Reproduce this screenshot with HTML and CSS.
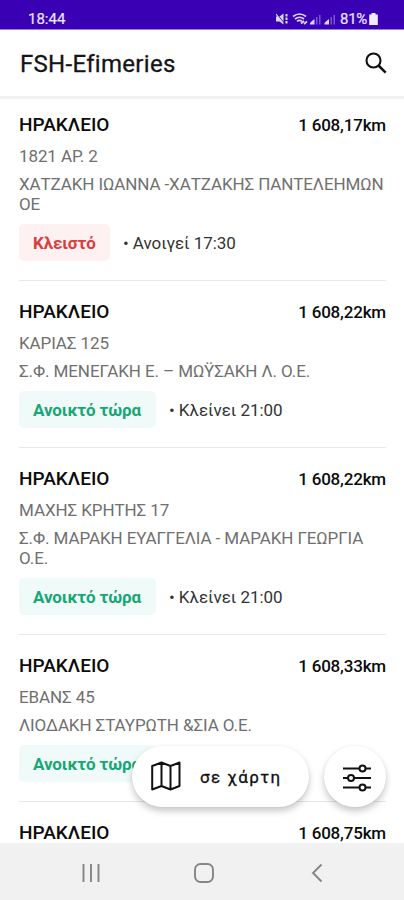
FILE: index.html
```html
<!DOCTYPE html>
<html lang="el">
<head>
<meta charset="utf-8">
<title>FSH-Efimeries</title>
<link rel="stylesheet" href="styles.css">
</head>
<body>
<div class="screen">
  <div class="status">
    <span class="clock">18:44</span>
    <div class="indicators">
      <svg class="sys" width="60" height="14" viewBox="0 0 60 14" fill="#ddd6fa">
        <path d="M0 4.500h3.500l4-3v11l-4-3H0z"/>
        <path d="M0 1l8 10" stroke="#3a00b3" stroke-width="1.200"/>
        <path d="M0 2l7 9" stroke="#ddd6fa" stroke-width="1.200"/>
        <path d="M10.500 2v10" stroke="#ddd6fa" stroke-width="2" stroke-dasharray="2.500 1"/>
        <g fill="none" stroke="#ddd6fa" stroke-width="1.700"><path d="M17 4.500q6.500-5 13 0M19 7q4.500-3.500 9 0M21 9.300q2.500-2 5 0"/><path d="M25 11.500l3-2.500M28 12l3-2.500"/></g>
        <path d="M34 12.500V11l2-2 2.500-2v5.500z"/><path d="M40 5h1.500v7.500H40zM43 3h1.500v9.500H43z" opacity=".4"/>
        <path d="M48.500 12.500V11l2-2L53 7v5.500z"/><path d="M54.500 5H56v7.500h-1.500zM57.500 3H59v9.500h-1.500z" opacity=".4"/>
      </svg>
      <span class="percent">81%</span>
      <svg class="battery" width="9" height="12" viewBox="0 0 9 12" fill="#f0ecff"><path d="M2.500 0h4v1.500h2.300V12H.2V1.500h2.300z"/></svg>
    </div>
  </div>
  <header class="appbar">
    <h1>FSH-Efimeries</h1>
    <svg width="24" height="24" viewBox="0 0 24 24" fill="none" stroke="#111" stroke-width="2.100"><circle cx="9.500" cy="9.500" r="7"/><path d="M14.500 14.500l7.200 7.200" stroke-width="2.500"/></svg>
  </header>
  <main class="list">
    <article class="item">
      <div class="top"><h2>ΗΡΑΚΛΕΙΟ</h2><span class="km">1 608,17km</span></div>
      <p class="address">1821 ΑΡ. 2</p>
      <p class="name">ΧΑΤΖΑΚΗ ΙΩΑΝΝΑ -ΧΑΤΖΑΚΗΣ ΠΑΝΤΕΛΕΗΜΩΝ<br>ΟΕ</p>
      <div class="state"><span class="badge closed">Κλειστό</span><span class="hours">• Ανοιγεί 17:30</span></div>
    </article>
    <article class="item">
      <div class="top"><h2>ΗΡΑΚΛΕΙΟ</h2><span class="km">1 608,22km</span></div>
      <p class="address">ΚΑΡΙΑΣ 125</p>
      <p class="name">Σ.Φ. ΜΕΝΕΓΑΚΗ Ε. – ΜΩΫΣΑΚΗ Λ. Ο.Ε.</p>
      <div class="state"><span class="badge open">Ανοικτό τώρα</span><span class="hours">• Κλείνει 21:00</span></div>
    </article>
    <article class="item">
      <div class="top"><h2>ΗΡΑΚΛΕΙΟ</h2><span class="km">1 608,22km</span></div>
      <p class="address">ΜΑΧΗΣ ΚΡΗΤΗΣ 17</p>
      <p class="name">Σ.Φ. ΜΑΡΑΚΗ ΕΥΑΓΓΕΛΙΑ - ΜΑΡΑΚΗ ΓΕΩΡΓΙΑ<br>Ο.Ε.</p>
      <div class="state"><span class="badge open">Ανοικτό τώρα</span><span class="hours">• Κλείνει 21:00</span></div>
    </article>
    <article class="item">
      <div class="top"><h2>ΗΡΑΚΛΕΙΟ</h2><span class="km">1 608,33km</span></div>
      <p class="address">ΕΒΑΝΣ 45</p>
      <p class="name">ΛΙΟΔΑΚΗ ΣΤΑΥΡΩΤΗ &amp;ΣΙΑ Ο.Ε.</p>
      <div class="state"><span class="badge open">Ανοικτό τώρα</span></div>
    </article>
    <article class="item">
      <div class="top"><h2>ΗΡΑΚΛΕΙΟ</h2><span class="km">1 608,75km</span></div>
    </article>
  </main>
  <div class="floating">
    <button class="map">
      <svg width="30" height="30" viewBox="0 0 30 30" fill="none" stroke="#111" stroke-width="2" stroke-linejoin="round"><path d="M1.200 5L10.500 1.500l9 3.500L28.500 1.500V25l-9 3.500-9-3.500-9.300 3.500zM10.500 1.500V25M19.500 5v23.500"/></svg>
      <span>σε χάρτη</span>
    </button>
    <button class="filter">
      <svg width="30" height="28" viewBox="0 0 30 28" fill="none" stroke="#111" stroke-width="2"><path d="M1 4.500h16M23 4.500h6M1 14h5M12 14h17M1 23.500h16M23 23.500h6"/><circle cx="20.500" cy="4.500" r="3"/><circle cx="9" cy="14" r="3"/><circle cx="20.500" cy="23.500" r="3"/></svg>
    </button>
  </div>
  <nav class="navbar">
    <svg width="18" height="20" viewBox="0 0 18 20" stroke="#858585" stroke-width="1.900"><path d="M1.500 1v18M9 1v18M16.500 1v18"/></svg>
    <svg class="home" width="20" height="20" viewBox="0 0 20 20" fill="none" stroke="#858585" stroke-width="1.900"><rect x="1" y="1" width="18" height="18" rx="5.500"/></svg>
    <svg width="12" height="20" viewBox="0 0 12 20" fill="none" stroke="#858585" stroke-width="1.900"><path d="M10.500 1.500L2 10l8.500 8.500"/></svg>
  </nav>
</div>
</body>
</html>
```
FILE: styles.css
```css
* { box-sizing: border-box; margin: 0; padding: 0; }
body { background: #fff; font-family: Roboto, "Liberation Sans", sans-serif; }
.screen { position: relative; width: 404px; height: 900px; display: flex; flex-direction: column; overflow: hidden; }
.status { flex: none; height: 30px; background: #3a00b3; border-bottom: 1px solid #9a7fd8; display: flex; justify-content: space-between; align-items: flex-start; padding: 10px 26px 0 28px; color: #e9e4ff; font-weight: 400; font-size: 15px; line-height: 18px; -webkit-text-stroke: .2px #e9e4ff; }
.indicators { display: flex; align-items: center; }
.percent { margin-left: 4px; margin-right: 2px; letter-spacing: -.3px; }
.appbar { flex: none; height: 69px; border-bottom: 3px solid #f0f0f0; display: flex; justify-content: space-between; align-items: center; padding: 0 16px 0 20px; }
.appbar h1 { font-size: 24px; font-weight: 400; color: #151515; letter-spacing: .3px; padding-top: 2px; -webkit-text-stroke: .3px #151515; }
.list { flex: 1; min-height: 0; overflow: hidden; margin-top: -5px; }
.item { margin: 0 18px 0 19px; padding-top: 19px; padding-bottom: 19px; border-bottom: 1px solid #e8e8e8; }
.top { display: flex; justify-content: space-between; align-items: center; height: 22px; line-height: 20px; color: #0c0c0c; }
.top h2 { font-size: 19px; font-weight: 500; padding-top: 2px; }
.km { font-size: 17px; font-weight: 500; letter-spacing: -.18px; padding-top: 1px; }
.address, .name { color: #707070; font-size: 17px; line-height: 20px; letter-spacing: -.1px; white-space: nowrap; }
.address { margin-top: 11px; }
.name { margin-top: 8px; }
.state { display: flex; align-items: center; height: 37px; margin-top: 10px; }
.badge { height: 37px; line-height: 38px; border-radius: 5px; padding-left: 14px; font-size: 17px; font-weight: 700; letter-spacing: -.1px; }
.closed { width: 91px; background: #fdf1f2; color: #db3d40; }
.open { width: 137px; background: #f0faf8; color: #17a777; }
.hours { margin-left: 13px; font-size: 17px; letter-spacing: -.04px; color: #333; }
.floating { position: absolute; left: 132px; top: 746px; display: flex; gap: 15px; }
button { border: 0; background: #fff; font-family: inherit; color: #111; height: 61px; border-radius: 31px; box-shadow: 0 4px 7px rgba(0,0,0,.22), 0 0 3px rgba(0,0,0,.04); display: flex; align-items: center; }
.map { width: 177px; padding-left: 19px; padding-bottom: 1px; gap: 19px; font-size: 17px; font-weight: 400; letter-spacing: 1.450px; -webkit-text-stroke: .3px #111; }
.map span { padding-top: 2px; }
.filter { width: 62px; justify-content: center; padding: 3px 0 0 4px; }
.navbar { flex: none; height: 57px; background: #f1f1f1; display: flex; justify-content: space-between; align-items: center; padding: 3px 81px 0 82px; }
.home { margin-right: 4px; }
```
